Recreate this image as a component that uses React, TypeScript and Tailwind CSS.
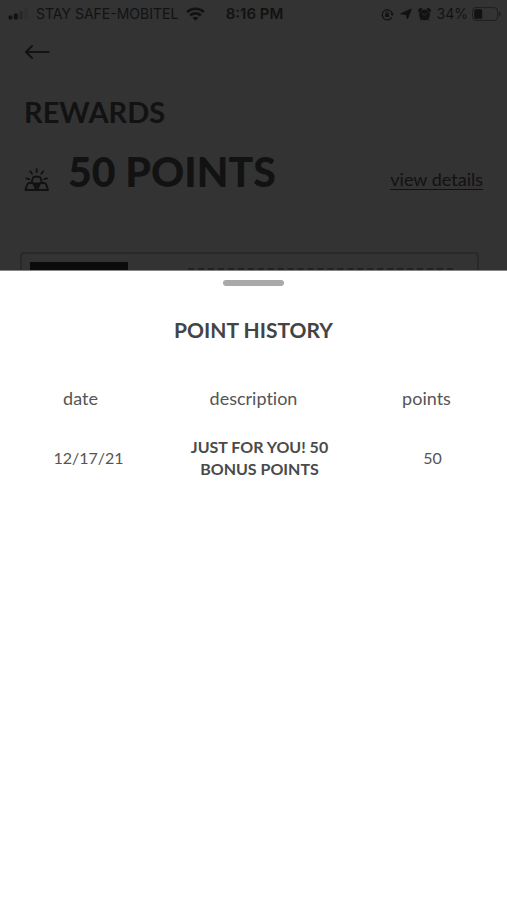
import { ReactNode } from 'react';

interface HistoryEntry {
  date: string;
  description: string;
  points: number;
}

const history: HistoryEntry[] = [
  { date: '12/17/21', description: 'JUST FOR YOU! 50 BONUS POINTS', points: 50 },
];

// ============================================================
// Status bar
// ============================================================
function StatusBar() {
  return (
    <div className="grid h-7 grid-cols-[1fr_auto_1fr] items-center pr-1.5 pl-2 font-['Inter',sans-serif] text-sm text-[#121212]">
      <div className="flex items-center gap-2 whitespace-nowrap">
        <svg width="20" height="12" viewBox="0 0 20 12" fill="currentColor" aria-hidden="true">
          <rect x="0.5" y="7.5" width="3.8" height="4" rx="1.2" />
          <rect x="5.8" y="5.5" width="4" height="6" rx="1.2" />
          <rect x="11.2" y="3" width="3.6" height="8.5" rx="1.2" opacity="0.3" />
          <rect x="16.2" y="0.5" width="3.6" height="11" rx="1.2" opacity="0.12" />
        </svg>
        <span>STAY SAFE-MOBITEL</span>
        <svg width="19" height="14" viewBox="0 0 18 13" fill="none" stroke="currentColor" strokeWidth="2.6" aria-hidden="true">
          <path d="M1 4.6 C5.4 0.5 12.6 0.5 17 4.6" />
          <path d="M4 7.9 C6.8 5.3 11.2 5.3 14 7.9" />
          <path d="M9 12.8 L6.3 10.1 C7.9 8.8 10.1 8.8 11.7 10.1 Z" fill="currentColor" stroke="none" />
        </svg>
      </div>
      <span className="text-[15px] font-semibold">8:16 PM</span>
      <div className="flex items-center justify-end gap-1.5">
        <svg width="13" height="13" viewBox="0 0 13 13" fill="none" stroke="currentColor" strokeWidth="1.3" aria-hidden="true">
          <path d="M10.7 9.4 A5.1 5.1 0 1 1 11.3 5.8" />
          <path d="M9.2 5.6 H13 L11.2 8 Z" fill="currentColor" stroke="none" />
          <rect x="4.1" y="5.8" width="4" height="3.2" fill="currentColor" stroke="none" />
          <path d="M4.9 6 V4.8 A1.2 1.2 0 0 1 7.3 4.8 V6" strokeWidth="0.9" />
        </svg>
        <svg width="12" height="12" viewBox="0 0 12 12" fill="currentColor" aria-hidden="true">
          <path d="M11.4 1 L7.4 11 L6.4 6.4 L0.8 5.8 Z" stroke="currentColor" strokeWidth="1" strokeLinejoin="round" />
        </svg>
        <svg width="13" height="13" viewBox="0 0 13 13" fill="currentColor" aria-hidden="true">
          <circle cx="6.5" cy="6.8" r="5.4" />
          <path d="M0.8 4.4 A2.4 2.4 0 0 1 4.6 1 Z M12.2 4.4 A2.4 2.4 0 0 0 8.4 1 Z" />
          <path d="M2.4 12.2 L3.4 10.6 M10.6 12.2 L9.6 10.6" stroke="currentColor" strokeWidth="1.6" />
          <path d="M4 5.3 L6.4 7.5 L9 5" fill="none" stroke="#333333" strokeWidth="0.8" />
        </svg>
        <div className="flex items-center gap-1">
          <span>34%</span>
          <svg width="29" height="14" viewBox="0 0 29 14" fill="none" aria-hidden="true">
            <rect x="0.6" y="0.6" width="25" height="12.8" rx="3.4" stroke="currentColor" strokeWidth="1" opacity="0.6" />
            <rect x="2.2" y="2.2" width="8" height="9.6" rx="1.6" fill="currentColor" />
            <path d="M26.8 4.6 C29.2 5.4 29.2 8.6 26.8 9.4 Z" fill="currentColor" opacity="0.6" />
          </svg>
        </div>
      </div>
    </div>
  );
}

function SunriseIcon() {
  return (
    <svg width="26" height="24" viewBox="0 0 26 24" fill="none" stroke="currentColor" strokeWidth="1.9" aria-hidden="true">
      {/* rays */}
      <path d="M12.7 1.2 V4 M6.2 3.2 L8 5.8 M19.2 3.2 L17.4 5.8 M2.4 10.4 L5.2 11.2 M23 10.4 L20.2 11.2" strokeLinecap="round" />
      {/* stacked bars */}
      <path d="M7.6 14.2 L8.9 10 Q9.3 8.7 10.6 8.7 H14.8 Q16.1 8.7 16.5 10 L17.8 14.2" />
      <path d="M1.4 22 L3.2 16.6 Q3.8 15 5.4 15 H8 Q9.4 15 10 16.6 L12.2 22 Z" strokeLinejoin="round" />
      <path d="M24 22 L22.2 16.6 Q21.6 15 20 15 H17.4 Q16 15 15.4 16.6 L13.2 22 Z" strokeLinejoin="round" />
      <path d="M8.6 14.6 H16.8 L12.7 20.4 Z" fill="currentColor" stroke="none" />
    </svg>
  );
}

// ============================================================
// Rewards page, dimmed behind the sheet
// ============================================================
function RewardsPage() {
  return (
    <div className="h-[30vh] overflow-hidden bg-[#333333] text-[#121212]">
      <StatusBar />
      <div className="px-6">
        <button type="button" aria-label="Back" className="mt-3 flex h-6 items-center">
          <svg width="26" height="16" viewBox="0 0 26 16" fill="none" stroke="currentColor" strokeWidth="2" strokeLinecap="round" strokeLinejoin="round">
            <path d="M24.5 8 H2 M8 2 L2 8 L8 14" />
          </svg>
        </button>
        <h1 className="mt-8 text-[29px] leading-8 font-bold">REWARDS</h1>
        <div className="mt-6 flex items-end justify-between">
          <div className="flex items-end gap-[18px]">
            <SunriseIcon />
            <p className="text-[41px] leading-10 font-black">50 POINTS</p>
          </div>
          <div className="pb-0.5">
            <a href="#history" className="block border-b border-[#121212] text-lg leading-5 [font-variant-ligatures:none]">
              view details
            </a>
          </div>
        </div>
      </div>
      <div className="mt-15 mr-7 ml-5 flex h-40 gap-15 rounded border-2 border-[#292929] px-2 pt-2">
        <div className="h-32 w-[98px] bg-[#0b0b0b]" />
        {/* top edge of the card copy, the rest is under the sheet */}
        <div className="mt-1.5 mr-4 h-0 flex-1 border-t-2 border-dashed border-[#222222]" />
      </div>
    </div>
  );
}

function HeadCell({ className, children }: { className?: string; children: ReactNode }) {
  return (
    <th scope="col" className={`text-lg leading-6 font-normal [font-variant-ligatures:none] ${className ?? ''}`}>
      {children}
    </th>
  );
}

// ============================================================
// Point history sheet
// ============================================================
function PointHistorySheet() {
  return (
    <section id="history" className="flex-1 border-t border-[#8a8585] bg-white text-[#555555]">
      <div className="mx-auto mt-[9px] h-1.5 w-[61px] rounded-full bg-[#a9a9a9]" />
      <h2 className="mt-8 text-center text-[21px] leading-6 font-bold text-[#444444]">POINT HISTORY</h2>
      <table className="mt-8 w-full table-fixed text-center">
        <thead>
          <tr className="h-12">
            <HeadCell className="pr-2">date</HeadCell>
            <HeadCell>description</HeadCell>
            <HeadCell className="pl-2">points</HeadCell>
          </tr>
        </thead>
        <tbody>
          {history.map((entry) => (
            <tr key={entry.date} className="h-18">
              <td className="pl-2">{entry.date}</td>
              <td className="pr-2 pl-5 leading-[22px] font-bold text-[#4a4a4a]">{entry.description}</td>
              <td className="pl-5">{entry.points}</td>
            </tr>
          ))}
        </tbody>
      </table>
    </section>
  );
}

export default function App() {
  return (
    <main className="flex min-h-screen flex-col font-['Lato',sans-serif]">
      <RewardsPage />
      <PointHistorySheet />
    </main>
  );
}
